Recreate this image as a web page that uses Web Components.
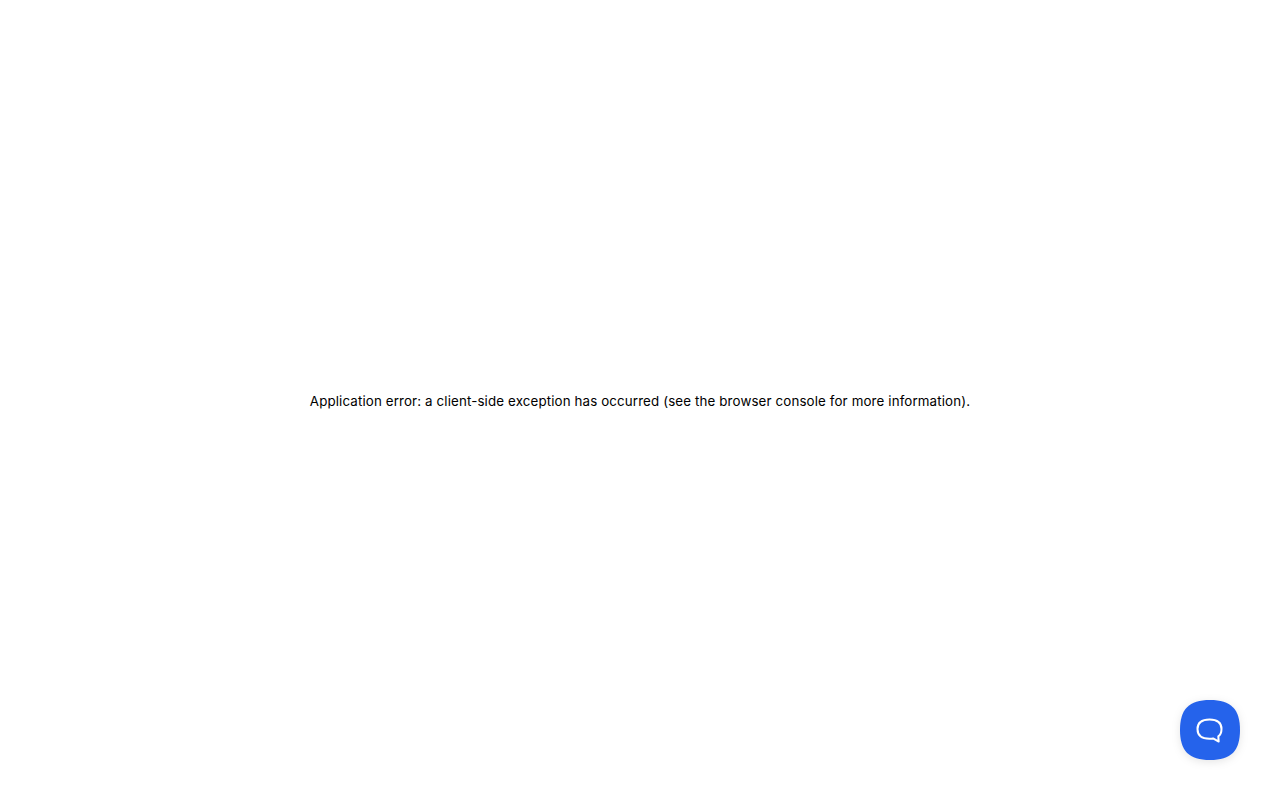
<!DOCTYPE html>
<html lang="en">
<head>
<meta charset="utf-8">
<title>Application error</title>
<style>
  html, body { margin: 0; height: 100%; background: #fff; }
  body { font-family: Inter, "Liberation Sans", sans-serif; color: #000; }
</style>
</head>
<body>
<error-page>Application error: a client-side exception has occurred (see the browser console for more information).</error-page>
<chat-launcher></chat-launcher>
<script>
class ErrorPage extends HTMLElement {
  constructor() {
    super();
    this.attachShadow({mode: 'open'});
    this.shadowRoot.innerHTML = `
      <style>
        :host {
          display: flex;
          height: 100vh;
          align-items: center;
          justify-content: center;
          font-size: 13.33px;
          letter-spacing: .13px;
          line-height: 20px;
          padding-top: 2px;
          box-sizing: border-box;
        }
      </style>
      <div><slot></slot></div>
    `;
  }
}

class ChatLauncher extends HTMLElement {
  constructor() {
    super();
    this.attachShadow({mode: 'open'});
    this.shadowRoot.innerHTML = `
      <style>
        :host {
          display: block;
          position: fixed;
          right: 40px;
          bottom: 40px;
          width: 60px;
          height: 60px;
          filter: drop-shadow(0 2px 4px rgba(0, 0, 0, .1));
        }
        svg { display: block; }
      </style>
      <svg width="60" height="60" viewBox="0 0 60 60" aria-label="Open chat">
        <path fill="#2563eb" d="M30 0C51 0 60 9 60 30S51 60 30 60 0 51 0 30 9 0 30 0Z"/>
        <path fill="none" stroke="#fff" stroke-width="2" stroke-linejoin="round" stroke-linecap="round"
          d="M29.500 19.500c8 0 12 3.500 12 9.500 0 3.500-1 5.800-3.200 7.400l.4 5.200-5.600-3.200c-1.200.2-2.400.3-3.600.3-8 0-12-3.500-12-9.700s4-9.500 12-9.500Z"/>
      </svg>
    `;
  }
}

customElements.define('error-page', ErrorPage);
customElements.define('chat-launcher', ChatLauncher);
</script>
</body>
</html>
